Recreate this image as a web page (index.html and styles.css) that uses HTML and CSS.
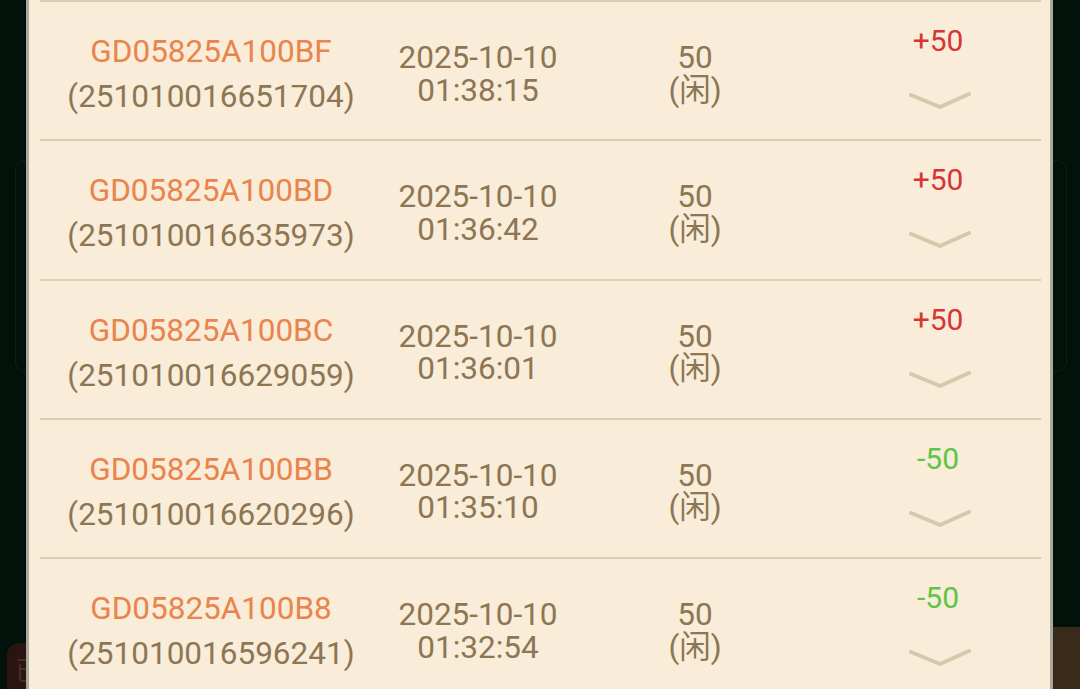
FILE: index.html
```html
<!DOCTYPE html>
<html lang="zh">
<head>
<meta charset="utf-8">
<link rel="stylesheet" href="styles.css">
</head>
<body>
<div class="backdrop">
  <div class="ghost-dialog"></div>
  <div class="ghost-btn">已</div>
  <div class="ghost-bar"></div>
</div>
<main class="panel">
  <div class="row">
    <div class="c-id"><span class="order">GD05825A100BF</span><span class="num">(251010016651704)</span></div>
    <div class="c-time"><span>2025-10-10</span><span>01:38:15</span></div>
    <div class="c-bet"><span>50</span><span>(闲)</span></div>
    <div class="c-res"><span class="win">+50</span><svg class="chev" viewBox="0 0 62 18" width="62" height="18"><polyline points="2,3 31,15 60,2" fill="none" stroke="#d6c8ad" stroke-width="4" stroke-linecap="round" stroke-linejoin="round"/></svg></div>
  </div>
  <div class="row">
    <div class="c-id"><span class="order">GD05825A100BD</span><span class="num">(251010016635973)</span></div>
    <div class="c-time"><span>2025-10-10</span><span>01:36:42</span></div>
    <div class="c-bet"><span>50</span><span>(闲)</span></div>
    <div class="c-res"><span class="win">+50</span><svg class="chev" viewBox="0 0 62 18" width="62" height="18"><polyline points="2,3 31,15 60,2" fill="none" stroke="#d6c8ad" stroke-width="4" stroke-linecap="round" stroke-linejoin="round"/></svg></div>
  </div>
  <div class="row">
    <div class="c-id"><span class="order">GD05825A100BC</span><span class="num">(251010016629059)</span></div>
    <div class="c-time"><span>2025-10-10</span><span>01:36:01</span></div>
    <div class="c-bet"><span>50</span><span>(闲)</span></div>
    <div class="c-res"><span class="win">+50</span><svg class="chev" viewBox="0 0 62 18" width="62" height="18"><polyline points="2,3 31,15 60,2" fill="none" stroke="#d6c8ad" stroke-width="4" stroke-linecap="round" stroke-linejoin="round"/></svg></div>
  </div>
  <div class="row">
    <div class="c-id"><span class="order">GD05825A100BB</span><span class="num">(251010016620296)</span></div>
    <div class="c-time"><span>2025-10-10</span><span>01:35:10</span></div>
    <div class="c-bet"><span>50</span><span>(闲)</span></div>
    <div class="c-res"><span class="lose">-50</span><svg class="chev" viewBox="0 0 62 18" width="62" height="18"><polyline points="2,3 31,15 60,2" fill="none" stroke="#d6c8ad" stroke-width="4" stroke-linecap="round" stroke-linejoin="round"/></svg></div>
  </div>
  <div class="row">
    <div class="c-id"><span class="order">GD05825A100B8</span><span class="num">(251010016596241)</span></div>
    <div class="c-time"><span>2025-10-10</span><span>01:32:54</span></div>
    <div class="c-bet"><span>50</span><span>(闲)</span></div>
    <div class="c-res"><span class="lose">-50</span><svg class="chev" viewBox="0 0 62 18" width="62" height="18"><polyline points="2,3 31,15 60,2" fill="none" stroke="#d6c8ad" stroke-width="4" stroke-linecap="round" stroke-linejoin="round"/></svg></div>
  </div>
</main>
</body>
</html>
```
FILE: styles.css
```css
html, body {
  margin: 0;
  padding: 0;
  height: 100%;
  overflow: hidden;
}
body {
  background: #02110a;
  font-family: Roboto, "Noto Sans CJK SC", sans-serif;
  position: relative;
}
.backdrop {
  position: absolute;
  inset: 0;
}
.ghost-dialog {
  position: absolute;
  left: 15px;
  top: 160px;
  width: 1050px;
  height: 210px;
  border: 1px solid rgba(255, 255, 255, 0.05);
  border-radius: 10px;
}
.ghost-btn {
  position: absolute;
  left: 7px;
  top: 643px;
  width: 40px;
  height: 60px;
  border-radius: 12px;
  background: #2a1410;
  color: #4e2a26;
  font-size: 26px;
  line-height: 56px;
  padding-left: 8px;
  box-sizing: border-box;
}
.ghost-bar {
  position: absolute;
  left: 1040px;
  top: 627px;
  right: 0;
  bottom: 0;
  background: #3a2a19;
}
.panel {
  position: relative;
  z-index: 1;
  margin-left: 26px;
  width: 1027px;
  height: 100%;
  box-sizing: border-box;
  background: #f9ecd8;
  border-left: 3px solid #aaa89e;
  border-right: 3px solid #aaa89e;
  padding: 0 9px 0 11px;
}
.row {
  height: 139.3px;
  box-sizing: border-box;
  border-top: 2px solid #dacdb0;
  display: grid;
  grid-template-columns: 342px 192px 242px 1fr;
  color: #8c7653;
  font-size: 31.5px;
}
.row > div {
  display: flex;
  flex-direction: column;
  align-items: center;
}
.c-id {
  padding-top: 27px;
  line-height: 45px;
}
.order {
  color: #e8844c;
}
.c-time, .c-bet {
  padding-top: 40px;
  line-height: 32.5px;
}
.c-res {
  padding-left: 19px;
  padding-top: 21px;
  font-size: 30px;
  line-height: 36px;
}
.win {
  color: #d73636;
}
.lose {
  color: #5fc544;
}
.chev {
  margin-top: 33px;
  margin-left: 3px;
  display: block;
}
```
